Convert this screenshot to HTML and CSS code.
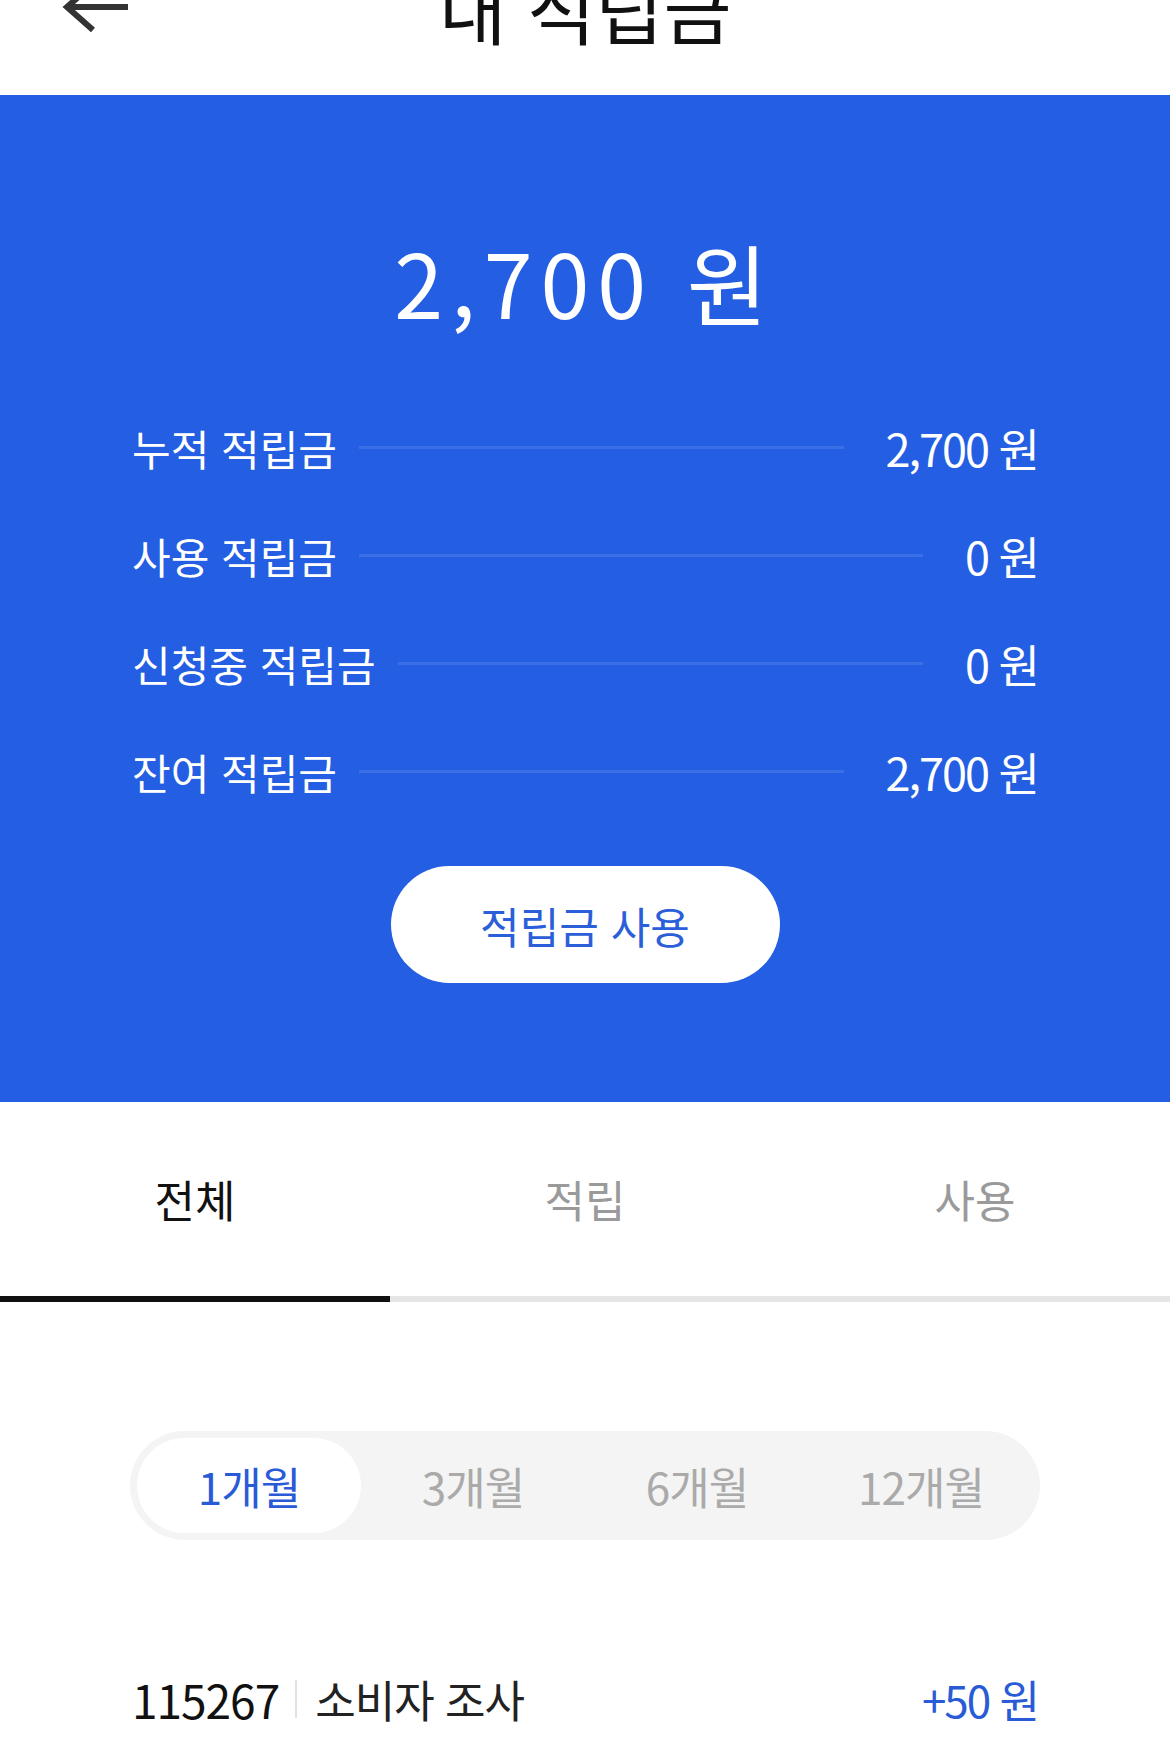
FILE: index.html
```html
<!DOCTYPE html>
<html lang="ko">
<head>
    <meta charset="UTF-8">
    <meta name="viewport" content="width=device-width, initial-scale=1.0">
    <title>내 적립금</title>
    <link rel="stylesheet" href="styles.css">
</head>
<body>
    <header class="topbar">
        <div class="topbar-inner">
            <button class="back" aria-label="뒤로">
                <svg width="70" height="56" viewBox="0 0 70 56">
                    <path d="M31 5 L5 28 L31 51 M5 28 H66" fill="none" stroke="#333" stroke-width="6"/>
                </svg>
            </button>
            <h1 class="title">내 적립금</h1>
            <span></span>
        </div>
    </header>

    <section class="summary">
        <div class="total">2,700 원</div>
        <ul class="rows">
            <li class="row"><span class="label">누적 적립금</span><span class="line"></span><span class="value">2,700 원</span></li>
            <li class="row"><span class="label">사용 적립금</span><span class="line"></span><span class="value">0 원</span></li>
            <li class="row"><span class="label">신청중 적립금</span><span class="line"></span><span class="value">0 원</span></li>
            <li class="row"><span class="label">잔여 적립금</span><span class="line"></span><span class="value">2,700 원</span></li>
        </ul>
        <button class="use-btn">적립금 사용</button>
    </section>

    <nav class="tabs">
        <a class="tab active">전체</a>
        <a class="tab">적립</a>
        <a class="tab">사용</a>
    </nav>

    <div class="period">
        <button class="seg active">1개월</button>
        <button class="seg">3개월</button>
        <button class="seg">6개월</button>
        <button class="seg">12개월</button>
    </div>

    <div class="history">
        <div class="item">
            <span class="item-id">115267</span>
            <span class="divider"></span>
            <span class="item-name">소비자 조사</span>
            <span class="item-amount">+50 원</span>
        </div>
    </div>
</body>
</html>
```

FILE: styles.css
```css
body {
    margin: 0;
    font-family: "Noto Sans CJK KR", "Noto Sans", sans-serif;
    background-color: #ffffff;
    color: #111111;
}
button {
    font-family: inherit;
    border: none;
    background: none;
    cursor: pointer;
}
.topbar {
    height: 95px;
    overflow: hidden;
}
.topbar-inner {
    height: 150px;
    margin-top: -68px;
    display: grid;
    grid-template-columns: 1fr auto 1fr;
    align-items: center;
}
.back {
    justify-self: start;
    padding: 0 0 0 62px;
    display: flex;
}
.title {
    margin: 0;
    font-size: 74px;
    font-weight: 400;
    line-height: 150px;
    color: #111111;
}
.summary {
    background-color: #245ee2;
    padding: 0 132px 119px;
    display: flex;
    flex-direction: column;
    align-items: center;
}
.total {
    margin-top: 141px;
    height: 90px;
    line-height: 90px;
    font-size: 88px;
    letter-spacing: 8px;
    color: #ffffff;
}
.rows {
    list-style: none;
    margin: 67px 0 0;
    padding: 0;
    width: 100%;
}
.row {
    height: 108px;
    display: flex;
    align-items: center;
    color: #ffffff;
}
.label {
    font-size: 42px;
}
.line {
    flex: 1;
    height: 3px;
    margin: 0 42px 0 22px;
    background-color: #3a6fe6;
}
.value {
    font-size: 45px;
    letter-spacing: -2px;
}
.use-btn {
    margin-top: 41px;
    width: 389px;
    height: 117px;
    border-radius: 59px;
    background-color: #ffffff;
    color: #2b5fd9;
    font-size: 43px;
}
.tabs {
    display: flex;
}
.tab {
    flex: 1;
    height: 194px;
    display: flex;
    align-items: center;
    justify-content: center;
    font-size: 44px;
    color: #9a9a9a;
    border-bottom: 6px solid #e5e5e5;
}
.tab.active {
    color: #111111;
    border-bottom-color: #111111;
}
.period {
    margin: 129px 130px 0;
    padding: 7px;
    height: 95px;
    border-radius: 55px;
    background-color: #f4f4f4;
    display: flex;
}
.seg {
    flex: 1;
    border-radius: 48px;
    font-size: 44px;
    letter-spacing: -1px;
    color: #aaaaaa;
}
.seg.active {
    background-color: #ffffff;
    color: #2a5bd7;
}
.history {
    padding: 0 132px;
}
.item {
    margin-top: 129px;
    height: 60px;
    display: flex;
    align-items: center;
    font-size: 46px;
    letter-spacing: -1px;
}
.item-id {
    color: #111111;
}
.divider {
    width: 2px;
    height: 38px;
    margin: 0 18px 0 16px;
    background-color: #e2e2e2;
}
.item-name {
    flex: 1;
    font-size: 44px;
    color: #222222;
}
.item-amount {
    font-size: 44px;
    letter-spacing: -2px;
    color: #2a5bd7;
}
```
